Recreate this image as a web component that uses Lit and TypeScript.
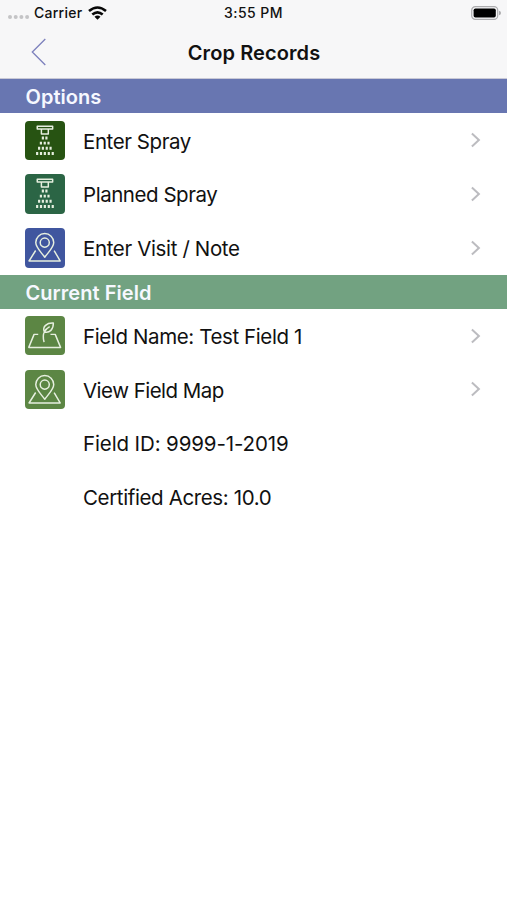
import { LitElement, html, svg, css, nothing } from "lit";
import { customElement } from "lit/decorators.js";

type Icon = "spray" | "pin" | "leaf";
interface Row {
  label: string;
  icon?: Icon;
  tone?: string;
  spacing: number;
}

const options: Row[] = [
  { label: "Enter Spray", icon: "spray", tone: "forest", spacing: -0.43 },
  { label: "Planned Spray", icon: "spray", tone: "teal", spacing: -0.46 },
  { label: "Enter Visit / Note", icon: "pin", tone: "blue", spacing: -0.36 },
];

const field: Row[] = [
  { label: "Field Name: Test Field 1", icon: "leaf", tone: "green", spacing: -0.39 },
  { label: "View Field Map", icon: "pin", tone: "green", spacing: -0.52 },
  { label: "Field ID: 9999-1-2019", spacing: -0.12 },
  { label: "Certified Acres: 10.0", spacing: -0.38 },
];

const drops: [number, number[]][] = [
  [17.3, [18.1, 21.7]],
  [22.4, [16.1, 20, 23.8]],
  [27.7, [14.3, 18.1, 22, 25.9]],
  [33, [12.3, 16.2, 20.1, 24.1, 28.1]],
];

const glyphs = {
  spray: svg`
    <path d="M12.4 5.2H28V8H12.4Z M16.6 8V13.2H23.6V8" stroke-width="1.5" />
    ${drops.map(([y, xs]) =>
      xs.map((x) => svg`<path d="M${x} ${y - 1.5}V${y + 1.5}" stroke-width="2.2" />`)
    )}`,
  pin: svg`
    <path d="M20 29.6C16.5 24.8 10.9 19.6 10.9 14.7A9.1 9.1 0 0 1 29.1 14.7C29.1 19.6 23.5 24.8 20 29.6Z" />
    <circle cx="20" cy="14.8" r="4.6" />
    <path d="M10.8 22.8L4.1 33.4H35.6L29.5 22.8" />`,
  leaf: svg`
    <path d="M13.4 18.6H9.2L3.8 31.8H36L30.6 18.6H25.8" />
    <path d="M19.3 26.4C18.5 23.4 17.8 19.4 19.6 16.2C17.2 10.6 22.2 6.8 28.7 7.2C28.9 13.4 25 17.6 19.6 16.2C20.6 13.8 22.5 12 25 10.7" />`,
};

@customElement("app-root")
export class AppRoot extends LitElement {
  static styles = css`
    :host {
      display: flex;
      flex-direction: column;
      height: 900px;
      overflow: hidden;
      background: #fff;
      color: #111;
      font-family: Inter, "Liberation Sans", sans-serif;
    }
    svg {
      display: block;
      flex: none;
    }
    .top {
      height: 79.4px;
      box-sizing: border-box;
      background: #f7f7f8;
      border-bottom: 1px solid #c9c9d6;
    }
    .status,
    .nav {
      display: grid;
      grid-template-columns: 1fr auto 1fr;
      align-items: center;
    }
    .status {
      height: 26px;
      font-size: 14px;
      line-height: 16px;
      font-weight: 500;
    }
    .carrier {
      display: flex;
      align-items: center;
      padding-left: 8px;
    }
    .carrier span {
      margin: 0 5.5px 0 4px;
      letter-spacing: 0.25px;
    }
    .time {
      letter-spacing: 0.45px;
    }
    .battery {
      justify-self: end;
      margin-right: 6px;
    }
    .nav {
      height: 52px;
    }
    .back {
      margin-left: 31px;
    }
    h1 {
      margin: 0;
      padding: 1px 0 0 1px;
      font-size: 20px;
      font-weight: 600;
      letter-spacing: 0.1px;
    }
    h2 {
      margin: 0;
      height: 34px;
      flex: none;
      padding: 1px 0 0 25.5px;
      box-sizing: border-box;
      line-height: 34px;
      font-size: 20px;
      font-weight: 600;
      letter-spacing: 0.05px;
      color: #f6f8ff;
    }
    .options {
      background: #6876b1;
    }
    .field {
      background: #72a281;
    }
    .row {
      display: grid;
      grid-template-columns: 39.5px 1fr auto;
      column-gap: 18.5px;
      align-items: center;
      flex: none;
      height: 53.75px;
      padding: 0 25px;
      font-size: 20.5px;
    }
    .label {
      grid-column: 2;
      white-space: nowrap;
      padding-top: 1.55px;
    }
    .icon {
      border-radius: 4px;
    }
    .forest {
      background: #275312;
    }
    .teal {
      background: #2b6545;
    }
    .blue {
      background: #40569f;
    }
    .green {
      background: #5c8644;
    }
  `;

  private row(r: Row) {
    return html`<div class="row">
      ${r.icon
        ? html`<svg class="icon ${r.tone}" width="39.5" height="39.5" viewBox="0 0 40 40"
            fill="none" stroke="#e6efdf" stroke-width="1.5" stroke-linejoin="round">${glyphs[r.icon]}</svg>`
        : nothing}
      <span class="label" style="letter-spacing:${r.spacing}px">${r.label}</span>
      ${r.icon
        ? html`<svg width="12" height="16" viewBox="0 0 12 16" fill="none" stroke="#bcbcc0" stroke-width="2">
            <path d="M1.9 1.5L8.9 8L1.9 14.6" />
          </svg>`
        : nothing}
    </div>`;
  }

  render() {
    return html`
      <header class="top">
        <div class="status">
          <div class="carrier">
            <svg width="22" height="14" viewBox="0 0 22 14" fill="#c4c4c6">
              ${[2, 7.7, 13.4, 19.1].map((x) => svg`<circle cx=${x} cy="11" r="2" />`)}
            </svg>
            <span>Carrier</span>
            <svg width="19" height="14" viewBox="0 0 19 14">
              <g fill="none" stroke="#080808" stroke-width="2.6">
                <path d="M1 5.1Q9.5 -2.1 18 5.1" />
                <path d="M4.3 8.6Q9.5 4.2 14.7 8.6" />
              </g>
              <path d="M6.5 10.7Q9.5 8.4 12.5 10.7L9.5 13.7Z" fill="#080808" />
            </svg>
          </div>
          <span class="time">3:55 PM</span>
          <svg class="battery" width="30" height="14" viewBox="0 0 30 14">
            <rect x=".7" y=".7" width="26" height="12.6" rx="3.6" fill="#f7f7f8" stroke="#acacae" stroke-width="1.2" />
            <rect x="2.6" y="2.5" width="22.2" height="9" rx="1.8" />
            <path d="M28 4.7Q30 5.3 30 7T28 9.3Z" fill="#acacae" />
          </svg>
        </div>
        <div class="nav">
          <svg class="back" width="16" height="28" viewBox="0 0 16 28" fill="none" stroke="#7d80bd" stroke-width="1.3">
            <path d="M14.3 1L1.3 14L14.3 27" />
          </svg>
          <h1>Crop Records</h1>
        </div>
      </header>
      <h2 class="options">Options</h2>
      ${options.map((r) => this.row(r))}
      <h2 class="field">Current Field</h2>
      ${field.map((r) => this.row(r))}
    `;
  }
}
